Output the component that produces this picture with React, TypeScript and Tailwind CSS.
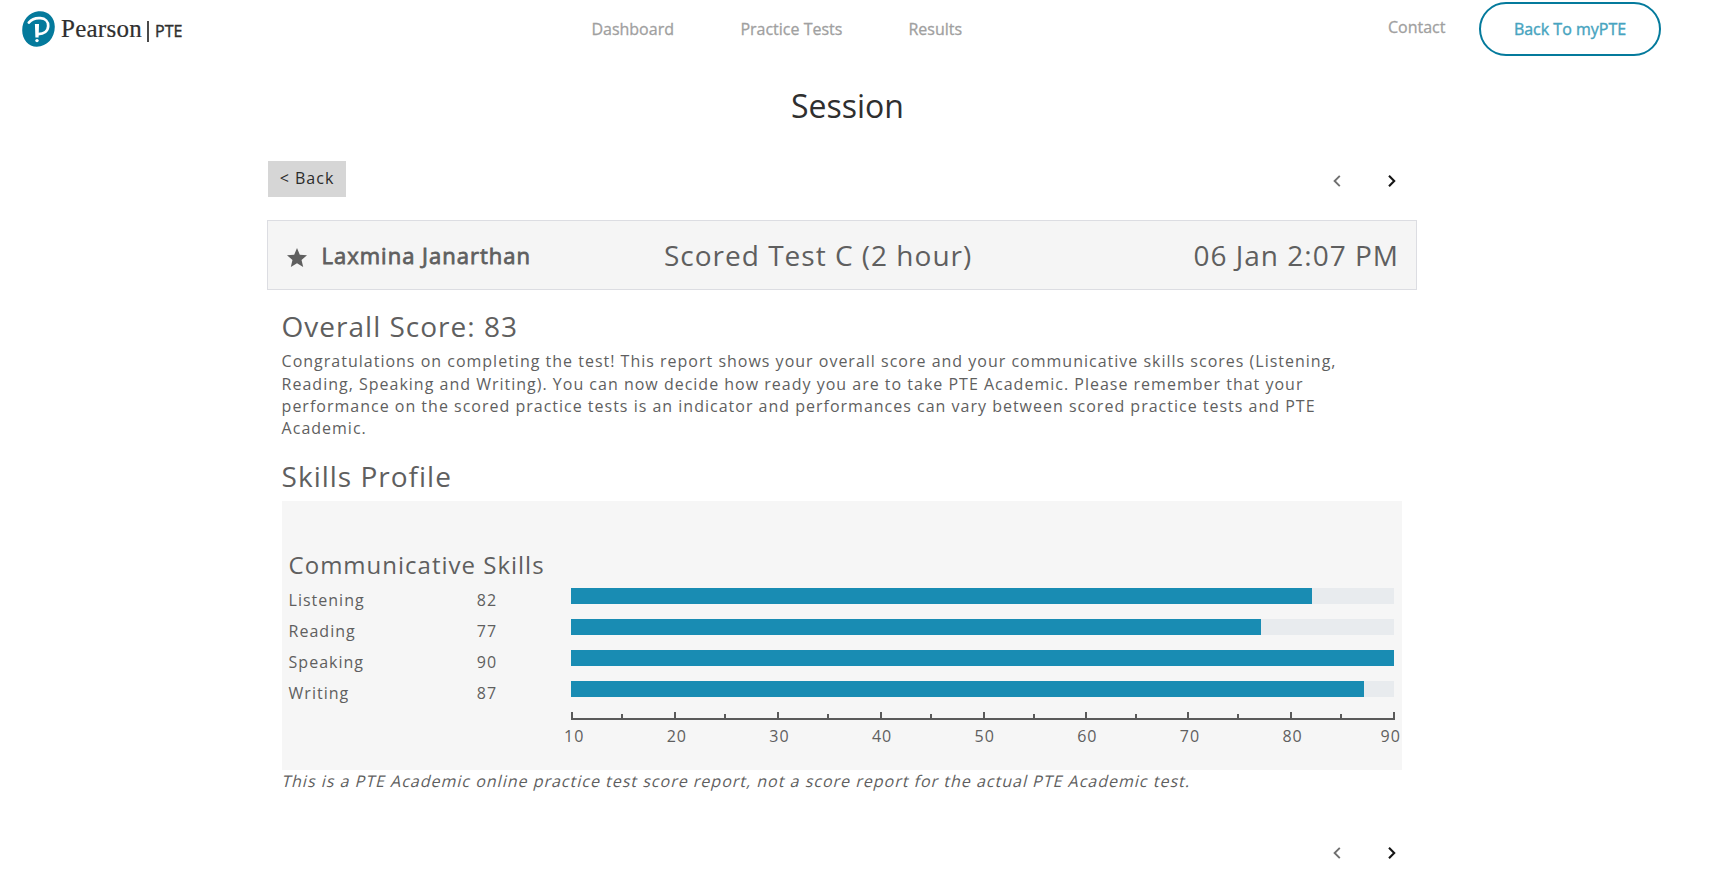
import React from "react";

const skills = [
  { name: "Listening", score: 82 },
  { name: "Reading", score: 77 },
  { name: "Speaking", score: 90 },
  { name: "Writing", score: 87 },
];

const ticks = [
  { label: 10, x: 0 },
  { label: 20, x: 103 },
  { label: 30, x: 206 },
  { label: 40, x: 309 },
  { label: 50, x: 412 },
  { label: 60, x: 514 },
  { label: 70, x: 616 },
  { label: 80, x: 719 },
  { label: 90, x: 822 },
];

function Logo() {
  return (
    <div className="flex h-[60px] items-start pl-[22px] pt-[11px]">
      <svg width="33" height="36" viewBox="0 0 33 36" className="shrink-0">
        <path
          d="M16.2 0.3C7.2 1.2 0.2 9 0.2 19.2C0.2 28.6 6.4 35.7 14.8 35.7C25 35.7 32.8 27 32.8 15.8C32.8 6.2 26 -0.7 16.2 0.3Z"
          fill="#047a9c"
        />
        <path
          d="M6.8 11.6C9.6 8.4 14 6.8 18.4 7.2C23.4 7.6 26.4 10.6 26.2 15C26 20 22 23 16.2 23.2"
          fill="none"
          stroke="#fff"
          strokeWidth="2.7"
          strokeLinecap="round"
        />
        <path d="M12.9 13H17L16.6 26.6H13.4Z" fill="#fff" />
        <circle cx="15" cy="29.6" r="1.7" fill="#fff" />
      </svg>
      <span className="ml-[6px] mt-[2px] w-[83px] font-['Liberation_Serif',serif] text-[25px] leading-[32px] tracking-[0.25px] text-[#2f2f2f] [-webkit-text-stroke:0.2px_#2f2f2f]">
        Pearson
      </span>
      <span className="ml-[3px] mt-[10px] h-[21px] w-[2px] bg-[#4a4a4a]" />
      <span className="ml-[6px] mt-[10px] text-[16px] leading-[20px] text-[#2f2f2f] [-webkit-text-stroke:0.4px_#2f2f2f]">
        PTE
      </span>
    </div>
  );
}

function Pager() {
  return (
    <div className="flex gap-[47px]">
      <svg width="8" height="12" viewBox="0 0 8 12" fill="none" stroke="#6f6f6f" strokeWidth="1.9">
        <path d="M6.8 0.8L1.6 6L6.8 11.2" />
      </svg>
      <svg width="8" height="12" viewBox="0 0 8 12" fill="none" stroke="#151515" strokeWidth="2.1">
        <path d="M1 0.8L6.2 6L1 11.2" />
      </svg>
    </div>
  );
}

function Axis() {
  return (
    <svg width="824" height="8" viewBox="0 0 824 8" fill="#5a5a5a" shapeRendering="crispEdges" className="block">
      <rect x="0" y="6" width="824" height="2" />
      {ticks.map((t) => (
        <rect key={t.label} x={t.x} y="0" width="2" height="8" />
      ))}
      {ticks.slice(0, -1).map((t) => (
        <rect key={t.label} x={t.x + 50} y="2" width="2" height="6" />
      ))}
    </svg>
  );
}

export default function App() {
  return (
    <div className="h-[878px] overflow-hidden bg-white font-['Open_Sans',sans-serif] text-[#5f5f5f]">
      <header className="flex h-[60px]">
        <div className="w-[591.4px]">
          <Logo />
        </div>
        <nav className="flex w-[796.6px] pt-[18px] text-[16px] leading-[22px] text-[#a0a0a0] [-webkit-text-stroke:0.3px_#a0a0a0]">
          <a className="w-[149px]">Dashboard</a>
          <a className="w-[168px]">Practice Tests</a>
          <a>Results</a>
        </nav>
        <a className="w-[91px] pt-[16px] text-[16px] leading-[22px] text-[#a0a0a0] [-webkit-text-stroke:0.3px_#a0a0a0]">
          Contact
        </a>
        <a className="mt-[2px] flex h-[54px] w-[182px] items-center justify-center rounded-[27px] border-2 border-[#047a9c] text-[16px] leading-[22px] text-[#47a4c0] [-webkit-text-stroke:0.4px_#47a4c0]">
          Back To myPTE
        </a>
      </header>

      <main className="ml-[267px] w-[1150px]">
        <h1 className="h-[101px] pt-[26px] pl-[11px] text-center text-[32px] leading-[40px] text-[#2f2f2f]">
          Session
        </h1>
        <div className="flex h-[59px] justify-between">
          <button className="ml-px flex h-[36px] w-[78px] justify-center bg-[#d6d6d6] pt-[6px] text-[16px] leading-[22px] tracking-[1px] text-[#2b2b2b]">
            &lt; Back
          </button>
          <div className="mr-[21px] pt-[14px]">
            <Pager />
          </div>
        </div>

        <section className="flex h-[70px] items-center border border-[#dcdde2] bg-[#f5f5f5] pl-[19px] pr-[17px]">
          <svg width="20" height="19" viewBox="2 2 20 19" fill="#5f5f5f" className="mt-[4px]">
            <path d="M12 17.27L18.18 21l-1.64-7.03L22 9.24l-7.19-.61L12 2 9.19 8.63 2 9.24l5.46 4.73L5.82 21z" />
          </svg>
          <span className="ml-[14.5px] w-[342.5px] text-[22px] leading-[32px] tracking-[1px] [-webkit-text-stroke:0.8px_#5f5f5f]">
            Laxmina Janarthan
          </span>
          <span className="text-[28px] leading-[36px] tracking-[1px]">Scored Test C (2 hour)</span>
          <span className="ml-auto text-[28px] leading-[36px] tracking-[1px]">06 Jan 2:07 PM</span>
        </section>

        <section className="ml-[14.6px] w-[1120px]">
          <h2 className="pt-[18px] text-[28px] leading-[36px] tracking-[1px]">Overall Score: 83</h2>
          <p className="mt-[6.2px] w-[1090px] text-[16px] leading-[22.4px] tracking-[1px]">
            Congratulations on completing the test! This report shows your overall score and your communicative skills
            scores (Listening,
            <br />
            Reading, Speaking and Writing). You can now decide how ready you are to take PTE Academic. Please remember
            that your
            <br />
            performance on the scored practice tests is an indicator and performances can vary between scored practice
            tests and PTE
            <br />
            Academic.
          </p>
          <h2 className="mt-[17.2px] h-[44px] text-[28px] leading-[38px] tracking-[1px]">Skills Profile</h2>
          <div className="h-[269px] bg-[#f6f6f6] pt-[48px] pl-[7px]">
            <h3 className="text-[24px] leading-[32px] tracking-[1px]">Communicative Skills</h3>
            <div className="pt-[7px]">
              {skills.map((s) => (
                <div key={s.name} className="flex h-[31px] text-[16px] leading-[24px] tracking-[1px]">
                  <span className="w-[188.2px]">{s.name}</span>
                  <span className="w-[93.8px]">{s.score}</span>
                  <div className="h-[16px] w-[823.87px] bg-[#e8ebee]">
                    <div className="h-full bg-[#198cb3]" style={{ width: `${((s.score - 10) / 80) * 100}%` }} />
                  </div>
                </div>
              ))}
            </div>
            <div className="ml-[282.4px]">
              <Axis />
            </div>
            <div className="mt-[4px] ml-[275.4px] flex text-[16px] leading-[24px] tracking-[1px]">
              {ticks.map((t) => (
                <span key={t.label} className="w-[102.65px] shrink-0 last:ml-[-4.5px] last:w-auto">
                  {t.label}
                </span>
              ))}
            </div>
          </div>
          <p className="-ml-[2px] w-max origin-bottom -skew-x-[14deg] text-[16px] leading-[22px] tracking-[1px]">
            This is a PTE Academic online practice test score report, not a score report for the actual PTE Academic
            test.
          </p>
        </section>
        <div className="mt-[55px] mr-[21px] flex justify-end">
          <Pager />
        </div>
      </main>
    </div>
  );
}
